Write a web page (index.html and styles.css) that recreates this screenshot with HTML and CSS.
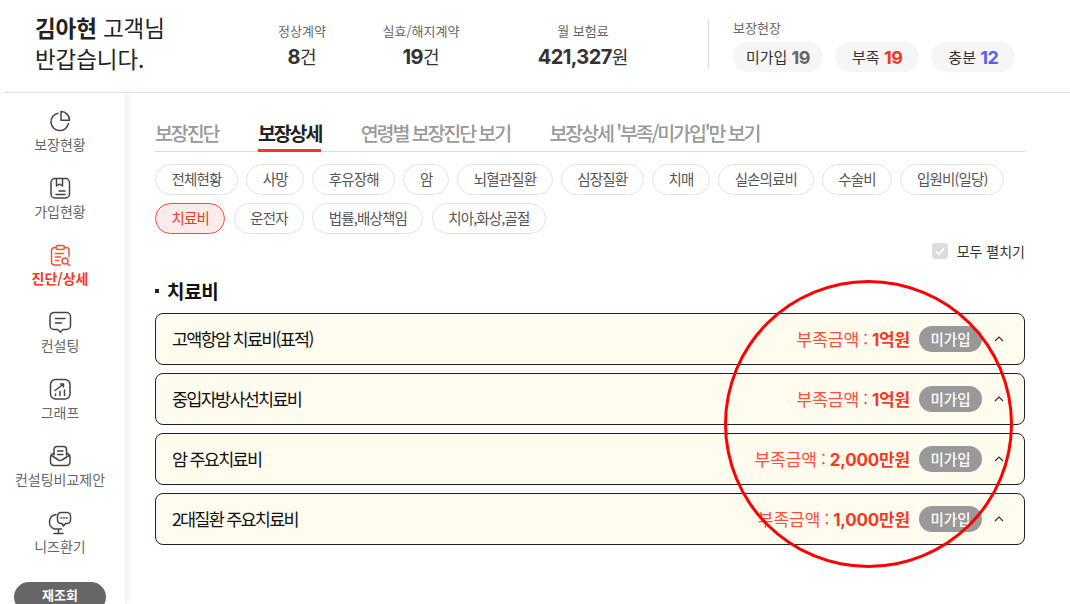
FILE: index.html
```html
<!DOCTYPE html>
<html lang="ko">
<head>
  <meta charset="UTF-8">
  <title>보장상세</title>
  <link rel="stylesheet" href="styles.css">
</head>
<body>

  <header class="top">
    <div class="hello"><b>김아현</b> 고객님<br>반갑습니다.</div>
    <div class="stat stat-a"><span>정상계약</span><p><b>8</b>건</p></div>
    <div class="stat stat-b"><span>실효/해지계약</span><p><b>19</b>건</p></div>
    <div class="stat stat-c"><span>월 보험료</span><p><b>421,327</b>원</p></div>
    <div class="status">
      <span class="status-title">보장현장</span>
      <div class="status-row">
        <div class="pill">미가입 <b class="gray">19</b></div>
        <div class="pill">부족 <b class="red">19</b></div>
        <div class="pill">충분 <b class="blue">12</b></div>
      </div>
    </div>
  </header>

  <div class="wrap">
    <aside class="side">
      <a class="menu">
        <svg viewBox="0 0 24 24"><path d="M10 4.200a8.800 8.800 0 1 0 10.400 10.400"/><path d="M13 2.500a8.600 8.600 0 0 1 8.500 8.800h-8.500z"/></svg>
        보장현황
      </a>
      <a class="menu">
        <svg viewBox="0 0 24 24"><rect x="3" y="2.500" width="18.500" height="19.500" rx="4"/><path d="M8.500 3v7l3-2 3 2V3M11 15h6M8 18.500h9"/></svg>
        가입현황
      </a>
      <a class="menu on">
        <svg viewBox="0 0 24 24"><path d="M8 4.500H6.500a3 3 0 0 0-3 3V19a3 3 0 0 0 3 3h6M16.500 4.500H18a3 3 0 0 1 3 3v6"/><rect x="8" y="2.500" width="8.500" height="4" rx="2"/><path d="M7.500 10.500h8M7.500 14h5M7.500 17.500h3"/><circle cx="17" cy="18" r="3"/><path d="M19.200 20.200l2.300 2.300"/></svg>
        진단/상세
      </a>
      <a class="menu">
        <svg viewBox="0 0 24 24"><path d="M6 2.500h12.500a4 4 0 0 1 4 4v9a4 4 0 0 1-4 4h-3.500l-2.700 2.700-2.700-2.700H6a4 4 0 0 1-4-4v-9a4 4 0 0 1 4-4z"/><path d="M7.500 8.500h9.500M7.500 13h6"/></svg>
        컨설팅
      </a>
      <a class="menu">
        <svg viewBox="0 0 24 24"><rect x="2.500" y="2.500" width="19.500" height="19.500" rx="5"/><path d="M7 13.500l8-6M12.500 7h3v3M7.500 18.500v-1.500M12 18.500v-4M16.500 18.500v-5.500"/></svg>
        그래프
      </a>
      <a class="menu">
        <svg viewBox="0 0 24 24"><path d="M6 11V5.500a3 3 0 0 1 3-3h6.500a3 3 0 0 1 3 3V11"/><path d="M9.500 7h5.500M9.500 10.500h5.500"/><path d="M6 9.500a3.500 3.500 0 0 0-3.500 3.500v5a3.500 3.500 0 0 0 3.500 3.500h12.500a3.500 3.500 0 0 0 3.500-3.500v-5a3.500 3.500 0 0 0-3.500-3.500M3.500 11.500l7 4.500a3 3 0 0 0 3.500 0l7-4.500"/></svg>
        컨설팅비교제안
      </a>
      <a class="menu">
        <svg viewBox="0 0 24 24"><path d="M8 3.500a7.500 7.500 0 0 0-1.500 14.500h7M10.500 18v4M6 22.500h9"/><path d="M13 1.500h6a3.500 3.500 0 0 1 3.500 3.500v4a3.500 3.500 0 0 1-3.500 3.500h-1.500L15.500 15l-1.500-2.500h-1A3.500 3.500 0 0 1 9.500 9V5A3.500 3.500 0 0 1 13 1.500z"/><path d="M13 7h.8M15.700 7h.8M18.400 7h.8"/></svg>
        니즈환기
      </a>
      <button class="reload">재조회</button>
    </aside>

    <main class="content">
      <nav class="tabs">
        <a>보장진단</a>
        <a class="on">보장상세</a>
        <a>연령별 보장진단 보기</a>
        <a>보장상세 '부족/미가입'만 보기</a>
      </nav>

      <div class="chips">
        <a>전체현황</a>
        <a>사망</a>
        <a>후유장해</a>
        <a>암</a>
        <a>뇌혈관질환</a>
        <a>심장질환</a>
        <a>치매</a>
        <a>실손의료비</a>
        <a>수술비</a>
        <a>입원비(일당)</a>
        <a class="on">치료비</a>
        <a>운전자</a>
        <a>법률,배상책임</a>
        <a>치아,화상,골절</a>
      </div>

      <div class="expand">
        <span class="check"><svg viewBox="0 0 16 16"><path d="M4 8.500l3 2.800 5-6"/></svg></span>
        모두 펼치기
      </div>

      <h3 class="sec-title">치료비</h3>

      <div class="row">
        <span class="row-name">고액항암 치료비(표적)</span>
        <span class="lack">부족금액 : <b>1억원</b></span>
        <span class="tag">미가입</span>
        <svg class="arrow" viewBox="0 0 10 6"><path d="M1 5l4-4 4 4"/></svg>
      </div>
      <div class="row">
        <span class="row-name">중입자방사선치료비</span>
        <span class="lack">부족금액 : <b>1억원</b></span>
        <span class="tag">미가입</span>
        <svg class="arrow" viewBox="0 0 10 6"><path d="M1 5l4-4 4 4"/></svg>
      </div>
      <div class="row">
        <span class="row-name">암 주요치료비</span>
        <span class="lack">부족금액 : <b>2,000만원</b></span>
        <span class="tag">미가입</span>
        <svg class="arrow" viewBox="0 0 10 6"><path d="M1 5l4-4 4 4"/></svg>
      </div>
      <div class="row">
        <span class="row-name">2대질환 주요치료비</span>
        <span class="lack">부족금액 : <b>1,000만원</b></span>
        <span class="tag">미가입</span>
        <svg class="arrow" viewBox="0 0 10 6"><path d="M1 5l4-4 4 4"/></svg>
      </div>
    </main>
  </div>

  <!-- 빨간 동그라미 표시 -->
  <div class="mark"></div>

</body>
</html>
```

FILE: styles.css
```css
* {
  box-sizing: border-box;
}
html, body {
  height: 604px;
  overflow: hidden;
}
body {
  margin: 0;
  background: #fff;
  color: #222;
  font-family: "Noto Sans CJK KR", sans-serif;
  position: relative;
}
b {
  font-weight: 700;
}
p {
  margin: 0;
}

/* 상단 */
.top {
  height: 93px;
  margin-left: 5px;
  border-bottom: 1px solid #ddd;
  display: flex;
  align-items: flex-start;
  position: relative;
}
.hello {
  width: 239px;
  padding: 12px 0 0 30px;
  font-size: 22.500px;
  line-height: 31px;
  letter-spacing: -0.1px;
}
.stat {
  text-align: center;
  padding-top: 21px;
  font-size: 18px;
  color: #333;
}
.stat span {
  display: block;
  font-size: 13px;
  line-height: 20px;
  color: #666;
}
.stat p {
  margin-top: 1px;
  line-height: 28px;
}
.stat b {
  font-family: Inter, "Noto Sans CJK KR", sans-serif;
  font-size: 20px;
  letter-spacing: -0.6px;
}
.stat-a {
  width: 116px;
}
.stat-b {
  width: 122px;
}
.stat-c {
  width: 202px;
}
.status {
  margin-left: 24px;
  margin-top: 19px;
  height: 50px;
  border-left: 1px solid #ddd;
  padding-left: 24px;
}
.status-title {
  display: block;
  font-size: 13px;
  line-height: 18px;
  color: #666;
}
.status-row {
  display: flex;
  gap: 12px;
  margin-top: 5px;
}
.pill {
  height: 30px;
  padding: 0 13px;
  border-radius: 15px;
  background: #f6f6f6;
  font-size: 15px;
  line-height: 30px;
  color: #333;
  white-space: nowrap;
}
.pill:nth-child(2), .pill:nth-child(3) {
  padding: 0 17px;
}
.pill b {
  font-family: Inter, "Noto Sans CJK KR", sans-serif;
  font-size: 18px;
  letter-spacing: -0.5px;
  vertical-align: -1px;
}
.gray {
  color: #666;
}
.red {
  color: #f33a24;
}
.blue {
  color: #5b5ff0;
}

.wrap {
  display: flex;
  height: 511px;
}

/* 왼쪽 메뉴 */
.side {
  width: 125px;
  flex: none;
  padding: 16px 5px 0 0;
  box-shadow: 2px 0 6px rgba(0, 0, 0, 0.08);
  display: flex;
  flex-direction: column;
  align-items: center;
}
.menu {
  width: 100%;
  height: 67px;
  flex: none;
  display: flex;
  flex-direction: column;
  align-items: center;
  font-size: 14px;
  line-height: 20px;
  color: #666;
  white-space: nowrap;
}
.menu svg {
  width: 24px;
  height: 24px;
  margin-bottom: 1px;
  fill: none;
  stroke: #444;
  stroke-width: 1.500;
  stroke-linecap: round;
  stroke-linejoin: round;
}
.menu.on {
  color: #f33a24;
  font-weight: 700;
}
.menu.on svg {
  stroke: #f5513d;
}
.reload {
  width: 92px;
  height: 30px;
  flex: none;
  margin-top: 4px;
  border: 0;
  border-radius: 15px;
  background: #666;
  color: #fff;
  font-family: inherit;
  font-size: 13px;
  font-weight: 700;
  padding: 0 0 6px;
}

/* 본문 */
.content {
  flex: 1;
  padding: 26px 45px 0 30px;
}
.tabs {
  display: flex;
  gap: 39.500px;
  height: 33px;
  border-bottom: 1px solid #ddd;
  font-size: 19.500px;
  line-height: 28px;
  letter-spacing: -2.1px;
  color: #999;
  font-weight: 500;
}
.tabs a {
  height: 33px;
}
.tabs a.on {
  color: #222;
  font-weight: 700;
  border-bottom: 3px solid #ee3a24;
}
.chips {
  display: flex;
  flex-wrap: wrap;
  gap: 8px 8.200px;
  margin-top: 12px;
}
.chips a {
  height: 31px;
  padding: 0 15.500px;
  border: 1px solid #e2e3ea;
  border-radius: 16px;
  font-size: 14.500px;
  line-height: 28px;
  color: #555;
  letter-spacing: -0.85px;
}
.chips a.on {
  background: #fdeaea;
  border-color: #f0503c;
  color: #f33a24;
}
.expand {
  display: flex;
  justify-content: flex-end;
  align-items: center;
  gap: 9px;
  margin-top: 7px;
  height: 20px;
  font-size: 14px;
  color: #333;
}
.check {
  width: 16px;
  height: 16px;
  border-radius: 3px;
  background: #ddd;
}
.check svg {
  display: block;
  fill: none;
  stroke: #fff;
  stroke-width: 1.500;
}
.sec-title {
  margin: 16px 0 8px;
  font-size: 19px;
  line-height: 28px;
  color: #111;
  display: flex;
  align-items: center;
  letter-spacing: -0.3px;
}
.sec-title::before {
  content: "";
  width: 4px;
  height: 4px;
  margin-right: 8px;
  background: #222;
}
.row {
  height: 52px;
  margin-bottom: 8px;
  padding: 0 20px 0 16px;
  border: 1px solid #222;
  border-radius: 8px;
  background: #fffbee;
  display: flex;
  align-items: center;
}
.row-name {
  flex: 1;
  padding-bottom: 2px;
  font-size: 17.500px;
  color: #111;
  letter-spacing: -1.75px;
}
.lack {
  padding-bottom: 2px;
  font-size: 17px;
  color: #f5513d;
  word-spacing: -0.7px;
}
.lack b {
  font-family: Inter, "Noto Sans CJK KR", sans-serif;
  font-size: 17px;
  letter-spacing: -0.2px;
  color: #f33a24;
}
.tag {
  margin-left: 9px;
  width: 63px;
  height: 26px;
  border-radius: 13px;
  background: #999;
  color: #fff;
  font-size: 14.500px;
  font-weight: 500;
  line-height: 25px;
  text-align: center;
}
.arrow {
  width: 10px;
  height: 6px;
  margin-left: 12px;
  fill: none;
  stroke: #333;
  stroke-width: 1.200;
}

.mark {
  position: absolute;
  left: 724px;
  top: 280px;
  width: 289px;
  height: 288px;
  border: 3px solid #f00;
  border-radius: 50%;
  pointer-events: none;
}
```
